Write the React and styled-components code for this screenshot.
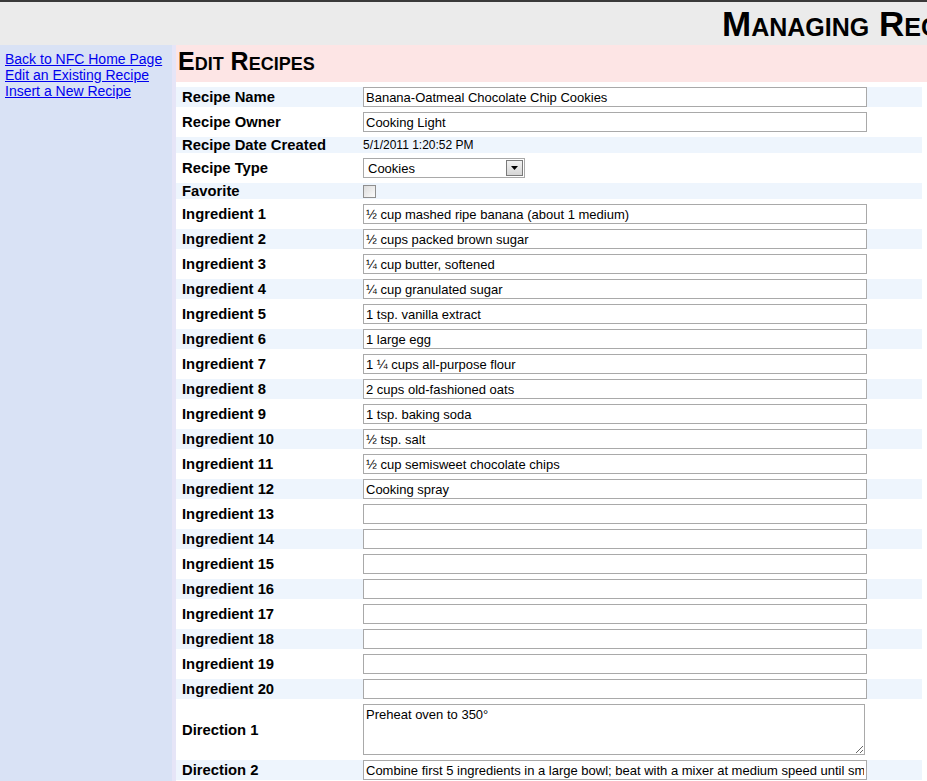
import React from "react";
import styled, { createGlobalStyle } from "styled-components";

const GlobalStyle = createGlobalStyle`
  html, body {
    margin: 0;
    padding: 0;
    overflow: hidden;
    background: #ffffff;
    font-family: "Liberation Sans", Arial, sans-serif;
  }
`;

const Header = styled.div`
  height: 43px;
  border-top: 2px solid #3a3a3a;
  background: #ebebeb;
  padding-left: 722px;
  white-space: nowrap;
  overflow: hidden;
`;

const Title = styled.h1`
  margin: 0;
  padding-top: 3px;
  font-family: "Liberation Sans Narrow", "Liberation Sans", Arial, sans-serif;
  font-size: 35px;
  line-height: 37px;
  font-weight: bold;
  font-variant: small-caps;
  color: #000;
`;

const Body = styled.div`
  display: flex;
  min-height: 736px;
`;

const Sidebar = styled.nav`
  width: 167px;
  flex: none;
  background: #d9e2f5;
  padding: 6px 0 0 5px;
  display: flex;
  flex-direction: column;
`;

const NavLink = styled.a`
  font-size: 14px;
  line-height: 16px;
  color: #0000ee;
  text-decoration: underline;
  cursor: pointer;
`;

const Main = styled.main`
  flex: 1;
  border-left: 4px solid #e6e5f7;
  min-width: 0;
`;

const PageHeading = styled.h2`
  margin: 0;
  height: 37px;
  background: #fde5e5;
  padding-left: 2px;
  font-size: 25px;
  line-height: 33px;
  font-weight: bold;
  font-variant: small-caps;
  color: #000;
`;

const Form = styled.div`
  display: flex;
  flex-direction: column;
  gap: 5px;
  padding: 5px 5px 0 0;
`;

const Row = styled.div`
  display: grid;
  grid-template-columns: 187px 1fr;
  align-items: center;
  min-height: ${(p) => (p.$short ? 16 : 20)}px;
  background: ${(p) => (p.$striped ? "#eef5fd" : "transparent")};
`;

const Label = styled.div`
  padding-left: 6px;
  font-size: 14.8px;
  font-weight: bold;
  color: #000;
  white-space: nowrap;
`;

const Value = styled.div`
  display: flex;
  align-items: center;
  font-size: 12px;
  color: #000;
`;

const TextInput = styled.input`
  box-sizing: border-box;
  width: 504px;
  height: 20px;
  margin: 0;
  padding: 0 2px;
  border: 1px solid #a9a9a9;
  font-family: "Liberation Sans", Arial, sans-serif;
  font-size: 13px;
  color: #000;
  background: #fff;
  outline: none;
`;

const TextArea = styled.textarea`
  box-sizing: border-box;
  width: 502px;
  height: 51px;
  margin: 0;
  padding: 2px 2px;
  border: 1px solid #a9a9a9;
  font-family: "Liberation Sans", Arial, sans-serif;
  font-size: 13px;
  color: #000;
  background: #fff;
  outline: none;
`;

const SelectWrap = styled.div`
  position: relative;
  width: 162px;
  height: 20px;
`;

const Select = styled.select`
  appearance: none;
  box-sizing: border-box;
  width: 162px;
  height: 20px;
  margin: 0;
  padding: 0 4px;
  border: 1px solid #a9a9a9;
  background: #fff;
  font-family: "Liberation Sans", Arial, sans-serif;
  font-size: 13px;
  color: #000;
  outline: none;
`;

const SelectButton = styled.span`
  position: absolute;
  top: 2px;
  right: 2px;
  width: 15px;
  height: 14px;
  border: 1px solid #7a7a7a;
  background: linear-gradient(#f2f2f2, #d6d6d6);
  display: flex;
  align-items: center;
  justify-content: center;
  pointer-events: none;
`;

const Checkbox = styled.input`
  appearance: none;
  box-sizing: border-box;
  width: 13px;
  height: 13px;
  margin: 0;
  border: 1px solid #8f8f8f;
  background: linear-gradient(135deg, #dcdcdc, #fbfbfb);
`;

const ingredients = [
  "½ cup mashed ripe banana (about 1 medium)",
  "½ cups packed brown sugar",
  "¼ cup butter, softened",
  "¼ cup granulated sugar",
  "1 tsp. vanilla extract",
  "1 large egg",
  "1 ¼ cups all-purpose flour",
  "2 cups old-fashioned oats",
  "1 tsp. baking soda",
  "½ tsp. salt",
  "½ cup semisweet chocolate chips",
  "Cooking spray",
];

const directions = [
  { text: "Preheat oven to 350°", area: true },
  { text: "Combine first 5 ingredients in a large bowl; beat with a mixer at medium speed until smooth." },
];

export default function App() {
  const ingredientRows = Array.from({ length: 20 }, (_, i) => ({
    label: "Ingredient " + (i + 1),
    value: ingredients[i] || "",
  }));

  return (
    <>
      <GlobalStyle />
      <Header>
        <Title>Managing Recipes</Title>
      </Header>
      <Body>
        <Sidebar>
          <NavLink>Back to NFC Home Page</NavLink>
          <NavLink>Edit an Existing Recipe</NavLink>
          <NavLink>Insert a New Recipe</NavLink>
        </Sidebar>
        <Main>
          <PageHeading>Edit Recipes</PageHeading>
          <Form>
            <Row $striped>
              <Label>Recipe Name</Label>
              <Value>
                <TextInput defaultValue="Banana-Oatmeal Chocolate Chip Cookies" />
              </Value>
            </Row>
            <Row>
              <Label>Recipe Owner</Label>
              <Value>
                <TextInput defaultValue="Cooking Light" />
              </Value>
            </Row>
            <Row $striped $short>
              <Label>Recipe Date Created</Label>
              <Value>5/1/2011 1:20:52 PM</Value>
            </Row>
            <Row>
              <Label>Recipe Type</Label>
              <Value>
                <SelectWrap>
                  <Select defaultValue="Cookies">
                    <option>Cookies</option>
                    <option>Cakes</option>
                    <option>Breads</option>
                  </Select>
                  <SelectButton>
                    <svg width="7" height="4" viewBox="0 0 7 4">
                      <path d="M0 0 H7 L3.5 4 Z" fill="#000" />
                    </svg>
                  </SelectButton>
                </SelectWrap>
              </Value>
            </Row>
            <Row $striped $short>
              <Label>Favorite</Label>
              <Value>
                <Checkbox type="checkbox" />
              </Value>
            </Row>
            {ingredientRows.map((r, i) => (
              <Row key={r.label} $striped={i % 2 === 1}>
                <Label>{r.label}</Label>
                <Value>
                  <TextInput defaultValue={r.value} />
                </Value>
              </Row>
            ))}
            {directions.map((d, i) => (
              <Row key={i} $striped={i % 2 === 1}>
                <Label>Direction {i + 1}</Label>
                <Value>
                  {d.area ? (
                    <TextArea defaultValue={d.text} />
                  ) : (
                    <TextInput defaultValue={d.text} />
                  )}
                </Value>
              </Row>
            ))}
          </Form>
        </Main>
      </Body>
    </>
  );
}
